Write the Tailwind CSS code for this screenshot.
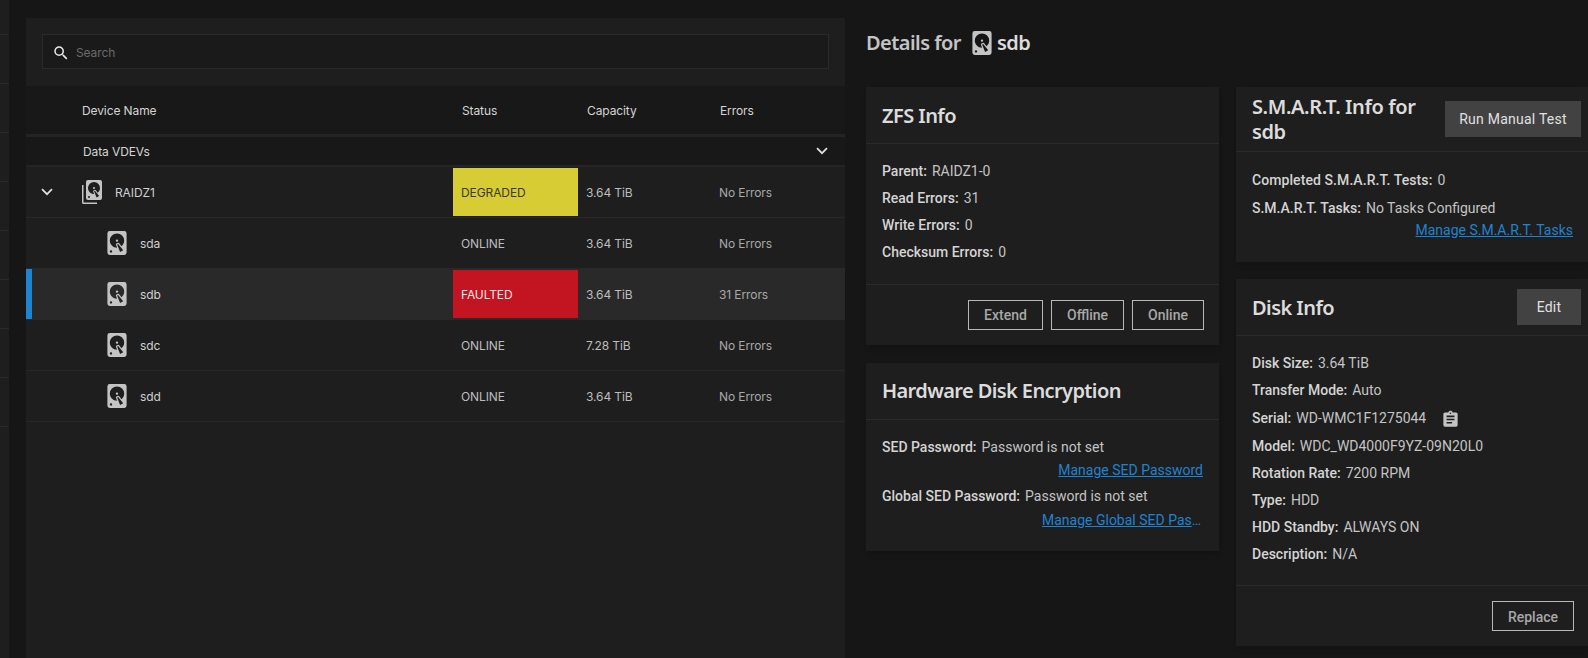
<!DOCTYPE html>
<html lang="en">
<head>
    <meta charset="UTF-8">
    <meta name="viewport" content="width=device-width, initial-scale=1.0">
    <title>Pool Status - Devices</title>
    <script src="https://cdn.jsdelivr.net/npm/@tailwindcss/browser@4"></script>
</head>
<body class="bg-[#161616] text-[#d4d4d4] font-['Roboto',sans-serif] overflow-hidden">

<div class="flex h-[658px] w-[1588px] overflow-hidden">
    <!-- Sidebar edge -->
    <div class="w-[9px] shrink-0 h-full bg-[#1e1e1e]">
        <div class="h-[35px] border-b border-[#2a2a2a]"></div>
        <div class="h-[49px] border-b border-[#2a2a2a]"></div>
        <div class="h-[49px] border-b border-[#2a2a2a]"></div>
        <div class="h-[49px] border-b border-[#2a2a2a]"></div>
        <div class="h-[49px] border-b border-[#2a2a2a]"></div>
        <div class="h-[49px] border-b border-[#2a2a2a]"></div>
        <div class="h-[49px] border-b border-[#2a2a2a]"></div>
        <div class="h-[49px] border-b border-[#2a2a2a]"></div>
        <div class="h-[49px] border-b border-[#2a2a2a]"></div>
    </div>

    <!-- Devices panel -->
    <div class="ml-[17px] mt-[18px] w-[819px] shrink-0 bg-[#1e1e1e] font-['Inter',sans-serif] text-xs tracking-[-0.1px]">
        <div class="h-[68px] px-4 pt-4">
            <div class="h-[35px] border border-[#2a2a2a] bg-[#1a1a1a] flex items-center pl-[9px] pt-[2px]">
                <svg class="w-[18px] h-[18px] fill-[#e8e8e8]" viewBox="0 0 24 24"><path d="M9.5,3A6.5,6.5 0 0,1 16,9.5C16,11.11 15.41,12.59 14.44,13.73L14.71,14H15.5L20.5,19L19,20.5L14,15.5V14.71L13.73,14.44C12.59,15.41 11.11,16 9.5,16A6.5,6.5 0 0,1 3,9.5A6.5,6.5 0 0,1 9.5,3M9.5,5C7,5 5,7 5,9.5C5,12 7,14 9.5,14C12,14 14,12 14,9.5C14,7 12,5 9.5,5Z"/></svg>
                <span class="ml-[6px] text-[#6b6b6b]">Search</span>
            </div>
        </div>

        <!-- Table head -->
        <div class="h-[48px] pt-[2px] bg-[#181818] grid grid-cols-[427px_125px_133px_1fr] items-center text-[#d4d4d4]">
            <div class="pl-[56px]">Device Name</div>
            <div class="pl-[9px]">Status</div>
            <div class="pl-[9px]">Capacity</div>
            <div class="pl-[9px]">Errors</div>
        </div>
        <div class="h-[33px] bg-[#181818] border-t-[3px] border-b-2 border-[#242424] flex items-center justify-between pl-[57px] pr-[17px]">
            <span class="pt-[2px]">Data VDEVs</span>
            <svg class="w-3 h-2" viewBox="0 0 12 8" fill="none" stroke="#e0e0e0" stroke-width="1.7"><path d="M1 1.2 6 6.2 11 1.2"/></svg>
        </div>

        <!-- RAIDZ1 -->
        <div class="h-[51px] border-b border-[#282828] grid grid-cols-[427px_125px_133px_1fr] items-center text-[#bdbdbd]">
            <div class="flex items-center">
                <svg class="ml-[15px] w-3 h-2" viewBox="0 0 12 8" fill="none" stroke="#e0e0e0" stroke-width="1.7"><path d="M1 1.2 6 6.2 11 1.2"/></svg>
                <svg class="ml-[29px] w-[20px] h-[24px] fill-[#c4c4c4]" viewBox="0 0 20 24">
                    <path d="M0 5h1.5v17.5H15V24H1.5A1.5 1.5 0 0 1 0 22.5Z"/>
                    <g transform="translate(4 0) scale(1) translate(-4 -2)"><path d="M6,2H18A2,2 0 0,1 20,4V20A2,2 0 0,1 18,22H6A2,2 0 0,1 4,20V4A2,2 0 0,1 6,2M12,4A6,6 0 0,0 6,10C6,13.31 8.69,16 12.1,16L11.22,13.77C10.95,13.29 11.11,12.68 11.59,12.4L12.45,11.9C12.93,11.63 13.54,11.79 13.82,12.27L15.74,14.69C17.12,13.59 18,11.9 18,10A6,6 0 0,0 12,4M12,9A1,1 0 0,1 13,10A1,1 0 0,1 12,11A1,1 0 0,1 11,10A1,1 0 0,1 12,9M7,18A1,1 0 0,0 6,19A1,1 0 0,0 7,20A1,1 0 0,0 8,19A1,1 0 0,0 7,18M12.09,13.27L14.58,19.58L17.17,18.08L12.95,12.77L12.09,13.27Z"/></g>
                </svg>
                <span class="ml-[13px] pt-[2px] text-[#d0d0d0]">RAIDZ1</span>
            </div>
            <div class="h-[48px] bg-[#d7cc33] text-[#3c3a1a] flex items-center pl-2 pt-[2px]">DEGRADED</div>
            <div class="pl-2 pt-[2px]">3.64 TiB</div>
            <div class="pl-2 pt-[2px] text-[#a8a8a8]">No Errors</div>
        </div>

        <!-- sda -->
        <div class="h-[51px] border-b border-[#282828] grid grid-cols-[427px_125px_133px_1fr] items-center text-[#bdbdbd]">
            <div class="flex items-center pl-[81px]">
                <svg class="w-5 h-6 fill-[#c4c4c4]" viewBox="4 2 16 20"><path d="M6,2H18A2,2 0 0,1 20,4V20A2,2 0 0,1 18,22H6A2,2 0 0,1 4,20V4A2,2 0 0,1 6,2M12,4A6,6 0 0,0 6,10C6,13.31 8.69,16 12.1,16L11.22,13.77C10.95,13.29 11.11,12.68 11.59,12.4L12.45,11.9C12.93,11.63 13.54,11.79 13.82,12.27L15.74,14.69C17.12,13.59 18,11.9 18,10A6,6 0 0,0 12,4M12,9A1,1 0 0,1 13,10A1,1 0 0,1 12,11A1,1 0 0,1 11,10A1,1 0 0,1 12,9M7,18A1,1 0 0,0 6,19A1,1 0 0,0 7,20A1,1 0 0,0 8,19A1,1 0 0,0 7,18M12.09,13.27L14.58,19.58L17.17,18.08L12.95,12.77L12.09,13.27Z"/></svg>
                <span class="ml-[13px] pt-[2px] text-[#d0d0d0]">sda</span>
            </div>
            <div class="pl-2 pt-[2px]">ONLINE</div>
            <div class="pl-2 pt-[2px]">3.64 TiB</div>
            <div class="pl-2 pt-[2px] text-[#a8a8a8]">No Errors</div>
        </div>

        <!-- sdb, selected -->
        <div class="relative h-[51px] bg-[#292929] border-b border-[#282828] grid grid-cols-[427px_125px_133px_1fr] items-center text-[#bdbdbd]">
            <div class="absolute left-0 top-0 bottom-0 w-[6px] bg-[#1e83d0]"></div>
            <div class="flex items-center pl-[81px]">
                <svg class="w-5 h-6 fill-[#c4c4c4]" viewBox="4 2 16 20"><path d="M6,2H18A2,2 0 0,1 20,4V20A2,2 0 0,1 18,22H6A2,2 0 0,1 4,20V4A2,2 0 0,1 6,2M12,4A6,6 0 0,0 6,10C6,13.31 8.69,16 12.1,16L11.22,13.77C10.95,13.29 11.11,12.68 11.59,12.4L12.45,11.9C12.93,11.63 13.54,11.79 13.82,12.27L15.74,14.69C17.12,13.59 18,11.9 18,10A6,6 0 0,0 12,4M12,9A1,1 0 0,1 13,10A1,1 0 0,1 12,11A1,1 0 0,1 11,10A1,1 0 0,1 12,9M7,18A1,1 0 0,0 6,19A1,1 0 0,0 7,20A1,1 0 0,0 8,19A1,1 0 0,0 7,18M12.09,13.27L14.58,19.58L17.17,18.08L12.95,12.77L12.09,13.27Z"/></svg>
                <span class="ml-[13px] pt-[2px] text-[#d0d0d0]">sdb</span>
            </div>
            <div class="h-[48px] bg-[#c21421] text-[#f0e4e4] flex items-center pl-2 pt-[2px]">FAULTED</div>
            <div class="pl-2 pt-[2px]">3.64 TiB</div>
            <div class="pl-2 pt-[2px] text-[#a8a8a8]">31 Errors</div>
        </div>

        <!-- sdc -->
        <div class="h-[51px] border-b border-[#282828] grid grid-cols-[427px_125px_133px_1fr] items-center text-[#bdbdbd]">
            <div class="flex items-center pl-[81px]">
                <svg class="w-5 h-6 fill-[#c4c4c4]" viewBox="4 2 16 20"><path d="M6,2H18A2,2 0 0,1 20,4V20A2,2 0 0,1 18,22H6A2,2 0 0,1 4,20V4A2,2 0 0,1 6,2M12,4A6,6 0 0,0 6,10C6,13.31 8.69,16 12.1,16L11.22,13.77C10.95,13.29 11.11,12.68 11.59,12.4L12.45,11.9C12.93,11.63 13.54,11.79 13.82,12.27L15.74,14.69C17.12,13.59 18,11.9 18,10A6,6 0 0,0 12,4M12,9A1,1 0 0,1 13,10A1,1 0 0,1 12,11A1,1 0 0,1 11,10A1,1 0 0,1 12,9M7,18A1,1 0 0,0 6,19A1,1 0 0,0 7,20A1,1 0 0,0 8,19A1,1 0 0,0 7,18M12.09,13.27L14.58,19.58L17.17,18.08L12.95,12.77L12.09,13.27Z"/></svg>
                <span class="ml-[13px] pt-[2px] text-[#d0d0d0]">sdc</span>
            </div>
            <div class="pl-2 pt-[2px]">ONLINE</div>
            <div class="pl-2 pt-[2px]">7.28 TiB</div>
            <div class="pl-2 pt-[2px] text-[#a8a8a8]">No Errors</div>
        </div>

        <!-- sdd -->
        <div class="h-[51px] border-b border-[#282828] grid grid-cols-[427px_125px_133px_1fr] items-center text-[#bdbdbd]">
            <div class="flex items-center pl-[81px]">
                <svg class="w-5 h-6 fill-[#c4c4c4]" viewBox="4 2 16 20"><path d="M6,2H18A2,2 0 0,1 20,4V20A2,2 0 0,1 18,22H6A2,2 0 0,1 4,20V4A2,2 0 0,1 6,2M12,4A6,6 0 0,0 6,10C6,13.31 8.69,16 12.1,16L11.22,13.77C10.95,13.29 11.11,12.68 11.59,12.4L12.45,11.9C12.93,11.63 13.54,11.79 13.82,12.27L15.74,14.69C17.12,13.59 18,11.9 18,10A6,6 0 0,0 12,4M12,9A1,1 0 0,1 13,10A1,1 0 0,1 12,11A1,1 0 0,1 11,10A1,1 0 0,1 12,9M7,18A1,1 0 0,0 6,19A1,1 0 0,0 7,20A1,1 0 0,0 8,19A1,1 0 0,0 7,18M12.09,13.27L14.58,19.58L17.17,18.08L12.95,12.77L12.09,13.27Z"/></svg>
                <span class="ml-[13px] pt-[2px] text-[#d0d0d0]">sdd</span>
            </div>
            <div class="pl-2 pt-[2px]">ONLINE</div>
            <div class="pl-2 pt-[2px]">3.64 TiB</div>
            <div class="pl-2 pt-[2px] text-[#a8a8a8]">No Errors</div>
        </div>
    </div>

    <!-- Details -->
    <div class="ml-[21px] shrink-0 w-[722px]">
        <div class="h-[87px] flex items-center pb-[1px] font-['Noto_Sans',sans-serif] font-semibold text-[20px] tracking-[-0.55px] text-[#c4c4c4]">
            <span>Details for</span>
            <svg class="ml-[11px] w-5 h-6 fill-[#c4c4c4]" viewBox="4 2 16 20"><path d="M6,2H18A2,2 0 0,1 20,4V20A2,2 0 0,1 18,22H6A2,2 0 0,1 4,20V4A2,2 0 0,1 6,2M12,4A6,6 0 0,0 6,10C6,13.31 8.69,16 12.1,16L11.22,13.77C10.95,13.29 11.11,12.68 11.59,12.4L12.45,11.9C12.93,11.63 13.54,11.79 13.82,12.27L15.74,14.69C17.12,13.59 18,11.9 18,10A6,6 0 0,0 12,4M12,9A1,1 0 0,1 13,10A1,1 0 0,1 12,11A1,1 0 0,1 11,10A1,1 0 0,1 12,9M7,18A1,1 0 0,0 6,19A1,1 0 0,0 7,20A1,1 0 0,0 8,19A1,1 0 0,0 7,18M12.09,13.27L14.58,19.58L17.17,18.08L12.95,12.77L12.09,13.27Z"/></svg>
            <span class="ml-[5px] text-[#dcdcdc]">sdb</span>
        </div>

        <div class="flex gap-[17px] items-start text-sm">
            <!-- Left column -->
            <div class="w-[353px] shrink-0">
                <div class="bg-[#1e1e1e] h-[258px] flex flex-col shadow-md">
                    <div class="h-[57px] shrink-0 border-b border-[#2a2a2a] flex items-center pl-4 pt-[3px] font-['Noto_Sans',sans-serif] font-semibold text-[20px] tracking-[-0.55px] text-[#dcdcdc]">ZFS Info</div>
                    <div class="h-[141px] shrink-0 border-b border-[#2a2a2a] pl-4 pt-[13px]">
                        <div class="h-[27px] flex items-center gap-[5px]"><span class="font-medium">Parent:</span><span class="text-[#c4c4c4]">RAIDZ1-0</span></div>
                        <div class="h-[27px] flex items-center gap-[5px]"><span class="font-medium">Read Errors:</span><span class="text-[#c4c4c4]">31</span></div>
                        <div class="h-[27px] flex items-center gap-[5px]"><span class="font-medium">Write Errors:</span><span class="text-[#c4c4c4]">0</span></div>
                        <div class="h-[27px] flex items-center gap-[5px]"><span class="font-medium">Checksum Errors:</span><span class="text-[#c4c4c4]">0</span></div>
                    </div>
                    <div class="flex justify-end gap-2 pr-[15px] pt-[15px] text-[#a8a8a8] font-medium">
                        <button class="w-[75px] h-[30px] border border-[#b8b8b8]">Extend</button>
                        <button class="w-[73px] h-[30px] border border-[#b8b8b8]">Offline</button>
                        <button class="w-[72px] h-[30px] border border-[#b8b8b8]">Online</button>
                    </div>
                </div>

                <div class="mt-[18px] bg-[#1e1e1e] h-[188px] shadow-md">
                    <div class="h-[57px] border-b border-[#2a2a2a] flex items-center pl-4 pt-[1px] font-['Noto_Sans',sans-serif] font-semibold text-[20px] tracking-[-0.6px] text-[#dcdcdc]">Hardware Disk Encryption</div>
                    <div class="pl-4 pr-4 pt-[16px]">
                        <div class="h-[22px] flex items-center gap-[5px]"><span class="font-medium">SED Password:</span><span class="text-[#c4c4c4]">Password is not set</span></div>
                        <div class="h-[24px] flex items-center justify-end"><a class="text-[#1e83d0] underline">Manage SED Password</a></div>
                        <div class="h-[28px] flex items-center gap-[5px]"><span class="font-medium">Global SED Password:</span><span class="text-[#c4c4c4]">Password is not set</span></div>
                        <div class="h-[20px] flex items-center justify-end -mr-[2px]"><a class="text-[#1e83d0] underline w-[163px] truncate">Manage Global SED Password</a></div>
                    </div>
                </div>
            </div>

            <!-- Right column -->
            <div class="w-[352px] shrink-0">
                <div class="bg-[#1e1e1e] h-[175px] shadow-md">
                    <div class="h-[65px] border-b border-[#2a2a2a] flex items-center justify-between pl-4 pr-[7px]">
                        <div class="w-[190px] pt-[2px] font-['Noto_Sans',sans-serif] font-semibold text-[20px] tracking-[-0.4px] leading-[25px] text-[#dcdcdc] -mt-[3px]">S.M.A.R.T. Info for sdb</div>
                        <button class="w-[136px] h-[36px] bg-[#424242] text-[#e0e0e0] tracking-[0.25px]">Run Manual Test</button>
                    </div>
                    <div class="pl-4 pr-[15px] pt-[14px]">
                        <div class="h-[28px] flex items-center gap-[5px]"><span class="font-medium tracking-[0.08px]">Completed S.M.A.R.T. Tests:</span><span class="text-[#c4c4c4]">0</span></div>
                        <div class="h-[27px] flex items-center gap-[5px]"><span class="font-medium">S.M.A.R.T. Tasks:</span><span class="text-[#c4c4c4]">No Tasks Configured</span></div>
                        <div class="h-[18px] flex items-center justify-end"><a class="text-[#1e83d0] underline">Manage S.M.A.R.T. Tasks</a></div>
                    </div>
                </div>

                <div class="mt-[17px] bg-[#1e1e1e] h-[367px] flex flex-col shadow-md">
                    <div class="h-[57px] shrink-0 border-b border-[#2a2a2a] flex items-center justify-between pl-4 pr-[7px]">
                        <span class="pt-[2px] font-['Noto_Sans',sans-serif] font-semibold text-[20px] tracking-[-0.55px] text-[#dcdcdc]">Disk Info</span>
                        <button class="w-[64px] h-[36px] bg-[#424242] text-[#e0e0e0] tracking-[0.25px]">Edit</button>
                    </div>
                    <div class="h-[250px] shrink-0 border-b border-[#2a2a2a] pl-4 pt-[13.5px]">
                        <div class="h-[27px] flex items-center gap-[5px]"><span class="font-medium">Disk Size:</span><span class="text-[#c4c4c4]">3.64 TiB</span></div>
                        <div class="h-[27px] flex items-center gap-[5px]"><span class="font-medium">Transfer Mode:</span><span class="text-[#c4c4c4]">Auto</span></div>
                        <div class="h-[29px] flex items-center gap-[5px]">
                            <span class="font-medium">Serial:</span><span class="text-[#c4c4c4]">WD-WMC1F1275044</span>
                            <svg class="ml-[10px] mt-[2px] w-[19px] h-[19px] fill-[#c4c4c4]" viewBox="0 0 24 24"><path d="M17,9H7V7H17M17,13H7V11H17M14,17H7V15H14M12,3A1,1 0 0,1 13,4A1,1 0 0,1 12,5A1,1 0 0,1 11,4A1,1 0 0,1 12,3M19,3H14.82C14.4,1.84 13.3,1 12,1C10.7,1 9.6,1.84 9.18,3H5A2,2 0 0,0 3,5V19A2,2 0 0,0 5,21H19A2,2 0 0,0 21,19V5A2,2 0 0,0 19,3Z"/></svg>
                        </div>
                        <div class="h-[27px] flex items-center gap-[5px]"><span class="font-medium">Model:</span><span class="text-[#c4c4c4]">WDC_WD4000F9YZ-09N20L0</span></div>
                        <div class="h-[27px] flex items-center gap-[5px]"><span class="font-medium">Rotation Rate:</span><span class="text-[#c4c4c4]">7200 RPM</span></div>
                        <div class="h-[27px] flex items-center gap-[5px]"><span class="font-medium">Type:</span><span class="text-[#c4c4c4]">HDD</span></div>
                        <div class="h-[27px] flex items-center gap-[5px]"><span class="font-medium">HDD Standby:</span><span class="text-[#c4c4c4]">ALWAYS ON</span></div>
                        <div class="h-[27px] flex items-center gap-[5px]"><span class="font-medium">Description:</span><span class="text-[#c4c4c4]">N/A</span></div>
                    </div>
                    <div class="flex justify-end pr-[14px] pt-[15px] text-[#a8a8a8] font-medium">
                        <button class="w-[82px] h-[30px] pt-[2px] border border-[#b8b8b8]">Replace</button>
                    </div>
                </div>
            </div>
        </div>
    </div>
</div>

</body>
</html>
